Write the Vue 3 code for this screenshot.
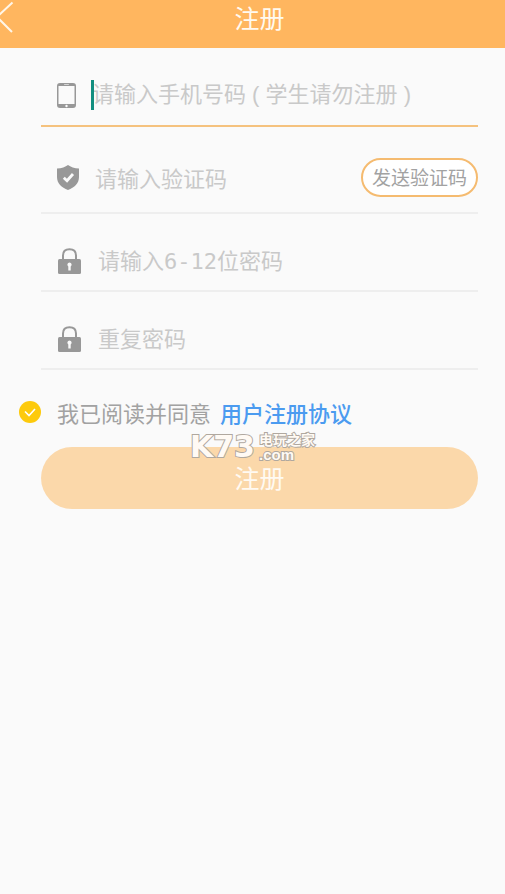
<script setup>
import { ref } from 'vue'

const phone = ref('')
const code = ref('')
const password = ref('')
const repeat = ref('')
const agreed = ref(true)
</script>

<template>
  <div class="page">
    <header class="bar">
      <button class="back" type="button" aria-label="返回">
        <svg width="14" height="34" viewBox="0 0 14 34" fill="none" stroke="#fff6e8" stroke-width="2">
          <path d="M12.500 2.500L-3 17L12 32" />
        </svg>
      </button>
      <h1 class="title">注册</h1>
    </header>

    <form class="form" @submit.prevent>
      <div class="row active">
        <svg class="icon" width="19" height="25" viewBox="0 0 19 25">
          <rect width="19" height="25" rx="3" fill="#989898" />
          <rect x="1.500" y="3" width="16" height="18" fill="#fafafa" />
          <rect x="7" y="1" width="5" height="1" rx=".5" fill="#d4d4d4" />
          <circle cx="9.500" cy="23" r="1.200" fill="#fafafa" />
        </svg>
        <div class="field">
          <input v-model="phone" class="wide" type="tel" aria-label="手机号码" placeholder="请输入手机号码 ( 学生请勿注册 )" />
          <span class="caret"></span>
        </div>
      </div>

      <div class="row code">
        <svg class="icon" width="22" height="25" viewBox="0 0 22 25">
          <path d="M11 0C8.500 2 4.500 3.300 0 3.500V12C0 18.500 4.500 22.500 11 25C17.500 22.500 22 18.500 22 12V3.500C17.500 3.300 13.500 2 11 0Z" fill="#989898" />
          <path d="M6.800 12.800L10 15.800L16 9" fill="none" stroke="#fafafa" stroke-width="2.800" />
        </svg>
        <div class="field">
          <input v-model="code" type="text" aria-label="验证码" placeholder="请输入验证码" />
        </div>
        <button class="send" type="button">发送验证码</button>
      </div>

      <div class="row">
        <svg class="icon" width="25" height="26" viewBox="0 0 25 26">
          <path d="M6 12V7.500C6 3.500 8.500 1.200 12.500 1.200S19 3.500 19 7.500V12" fill="none" stroke="#989898" stroke-width="2" />
          <rect x="1" y="11" width="23" height="15" rx="1.500" fill="#989898" />
          <path d="M12.500 14.500a2.200 2.200 0 0 1 1.200 4V22.500h-2.400V18.500a2.200 2.200 0 0 1 1.200-4Z" fill="#fafafa" />
        </svg>
        <div class="field">
          <input v-model="password" class="mono" type="password" aria-label="密码" placeholder="请输入6-12位密码" />
        </div>
      </div>

      <div class="row">
        <svg class="icon" width="25" height="26" viewBox="0 0 25 26">
          <path d="M6 12V7.500C6 3.500 8.500 1.200 12.500 1.200S19 3.500 19 7.500V12" fill="none" stroke="#989898" stroke-width="2" />
          <rect x="1" y="11" width="23" height="15" rx="1.500" fill="#989898" />
          <path d="M12.500 14.500a2.200 2.200 0 0 1 1.200 4V22.500h-2.400V18.500a2.200 2.200 0 0 1 1.200-4Z" fill="#fafafa" />
        </svg>
        <div class="field">
          <input v-model="repeat" class="mono" type="password" aria-label="重复密码" placeholder="重复密码" />
        </div>
      </div>

      <div class="agree">
        <label class="consent">
          <span class="tick">
            <input v-model="agreed" type="checkbox" />
            <svg v-if="agreed" width="22" height="22" viewBox="0 0 22 22" fill="none" stroke="#fff" stroke-width="1.600">
              <path d="M6 10.500L10 14.500L16 8" />
            </svg>
          </span>
          <span>我已阅读并同意</span>
        </label>
        <a class="terms" href="#">用户注册协议</a>
      </div>

      <div class="actions">
        <button class="submit" type="submit">注册</button>
        <div class="watermark">
          <span class="mark">K73</span>
          <span class="site">
            <span class="name">电玩之家</span>
            <span class="domain">.com</span>
          </span>
        </div>
      </div>
    </form>
  </div>
</template>

<style>
body {
  background: #fafafa;
}
</style>

<style scoped>
.page {
  font-family: "Noto Sans CJK SC", sans-serif;
  color: #a2a2a2;
}

button,
input {
  font-family: inherit;
  margin: 0;
  padding: 0;
  border: 0;
  background: none;
}

.bar {
  display: grid;
  grid-template-columns: 1fr auto 1fr;
  align-items: center;
  padding-bottom: 14px;
  background: #ffb65f;
}

.back {
  justify-self: start;
  display: flex;
}

.title {
  grid-column: 2;
  margin: 0 0 0 14px;
  font-size: 25px;
  line-height: 34px;
  font-weight: 400;
  color: #fffaf0;
}

.row {
  display: flex;
  align-items: center;
  gap: 16px;
  margin: 0 27px 0 41px;
  padding: 32px 0 14px 16px;
  border-bottom: 2px solid #eee;
}

.row.active {
  padding-bottom: 15px;
  border-color: #f5c27e;
}

.row.code {
  padding-top: 31px;
  padding-bottom: 15px;
}

.icon {
  flex: none;
}

.field {
  position: relative;
  flex: 1;
  min-width: 0;
}

.field input {
  display: block;
  box-sizing: border-box;
  width: 100%;
  height: 30px;
  padding-bottom: 2px;
  font-size: 22px;
  line-height: 28px;
  color: #666;
  outline: none;
}

.field input::placeholder {
  color: #c9c9c9;
  opacity: 1;
}

.field input.wide {
  padding-bottom: 0;
  font-family: "Liberation Sans", "Noto Sans CJK SC", sans-serif;
}

.field input.mono {
  padding-bottom: 0;
  font-family: "DejaVu Sans Mono", "Noto Sans CJK SC", monospace;
}

.caret {
  position: absolute;
  left: -1px;
  top: 0;
  width: 3px;
  height: 30px;
  background: #138f80;
}

.send {
  flex: none;
  height: 39px;
  padding: 0 9px 2px;
  border: 2px solid #f5bb70;
  border-radius: 20px;
  background: #fff;
  font-size: 19px;
  line-height: 33px;
  color: #a2a2a2;
}

.agree {
  display: flex;
  align-items: center;
  gap: 9px;
  padding: 27px 19px 20px;
  font-size: 22px;
  line-height: 30px;
}

.consent {
  display: flex;
  align-items: center;
  gap: 16px;
}

.tick {
  display: grid;
}

.tick > * {
  grid-area: 1 / 1;
}

.tick input {
  appearance: none;
  width: 22px;
  height: 22px;
  border-radius: 50%;
  background: #ddd;
}

.tick input:checked {
  background: #fdca0c;
}

.tick svg {
  pointer-events: none;
}

.terms {
  font-weight: 500;
  color: #4b9bf0;
  text-decoration: none;
}

.actions {
  position: relative;
  padding: 0 27px 0 41px;
}

.submit {
  display: block;
  width: 100%;
  height: 62px;
  padding-bottom: 2px;
  border-radius: 31px;
  background: #fbd8aa;
  font-size: 25px;
  line-height: 26px;
  color: #fffaf2;
}

.watermark {
  position: absolute;
  top: -16px;
  left: 50%;
  transform: translateX(-50%);
  display: flex;
  align-items: center;
  gap: 4px;
  color: #fffaf4;
  font-weight: 700;
  -webkit-text-stroke: 2px #b0a89f;
  paint-order: stroke fill;
  pointer-events: none;
}

.mark {
  font-family: "DejaVu Sans", sans-serif;
  font-size: 30px;
  line-height: 30px;
}

.site {
  display: flex;
  flex-direction: column;
}

.name {
  font-size: 14px;
  line-height: 16px;
}

.domain {
  font-family: "Liberation Sans", sans-serif;
  font-size: 15px;
  line-height: 16px;
}
</style>
